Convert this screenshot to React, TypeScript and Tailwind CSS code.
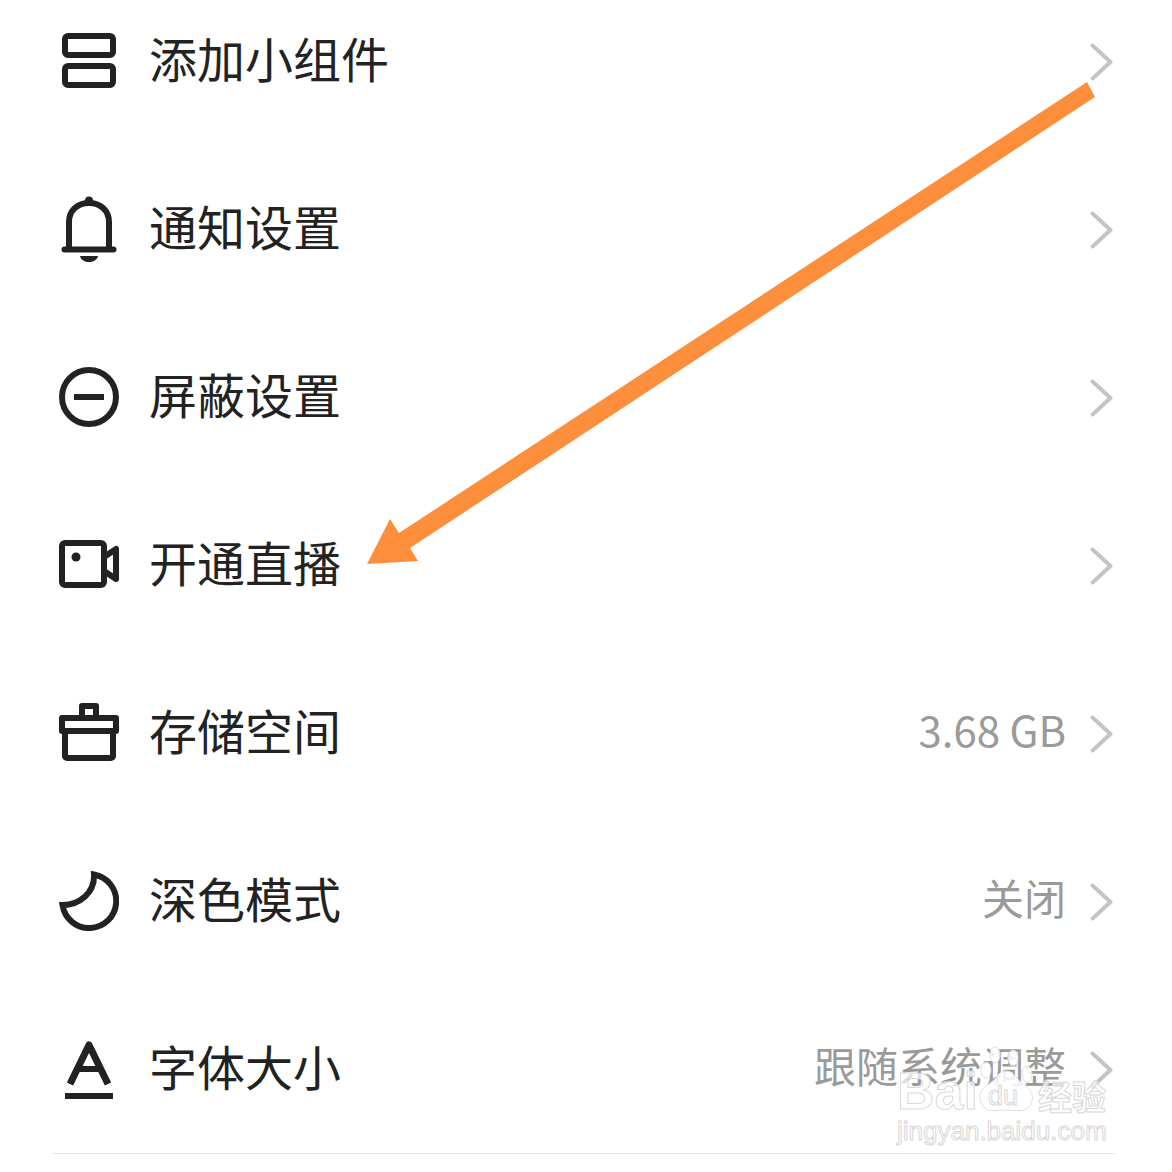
import type { ReactNode } from 'react'

const stroke = {
  fill: 'none',
  stroke: '#222222',
  strokeWidth: 6,
  strokeLinejoin: 'round' as const,
  strokeLinecap: 'round' as const,
}

// all icons share a 60px wide box, centered on the row
const WidgetIcon = () => (
  <svg width="60" height="60" viewBox="0 0 60 60">
    <rect x="6" y="5" width="48" height="19" rx="3" {...stroke} />
    <rect x="6" y="35" width="48" height="19" rx="3" {...stroke} />
  </svg>
)

const BellIcon = () => (
  <svg width="60" height="70" viewBox="0 0 60 70">
    <path d="M10 54V28C10 16 19 9 30 9s20 7 20 19v26" {...stroke} />
    <path d="M5.500 55.500h49" {...stroke} />
    <circle cx="30" cy="6.500" r="4" fill="#222222" />
    <path d="M21 62h18c-1 4-5 6-9 6s-8-2-9-6z" fill="#222222" />
  </svg>
)

const BlockIcon = () => (
  <svg width="60" height="60" viewBox="0 0 60 60">
    <circle cx="30" cy="30" r="27" {...stroke} />
    <rect x="15" y="27" width="30" height="6" fill="#222222" />
  </svg>
)

const VideoIcon = () => (
  <svg width="60" height="50" viewBox="0 0 60 50">
    <rect x="3" y="3" width="42" height="42" rx="3" {...stroke} />
    <circle cx="17" cy="17" r="4.500" fill="#222222" />
    <path d="M45 17l12-8v30l-12-8" {...stroke} />
  </svg>
)

const StorageIcon = () => (
  <svg width="60" height="60" viewBox="0 0 60 60">
    <path d="M23 15V3h14v12" {...stroke} />
    <path d="M3 28V15h54v13z" {...stroke} />
    <path d="M6 28v25a2 2 0 0 0 2 2h44a2 2 0 0 0 2-2V28" {...stroke} />
  </svg>
)

const MoonIcon = () => (
  <svg width="60" height="60" viewBox="0 0 60 60">
    <path d="M35 3.500A27 27 0 1 1 3.500 34C20 34 36 22 35 3.500z" {...stroke} strokeLinecap="butt" strokeLinejoin="miter" />
  </svg>
)

const FontIcon = () => (
  <svg width="50" height="60" viewBox="0 0 50 60">
    <path d="M6 45L25 6l19 39" {...stroke} strokeWidth={7} strokeLinecap="butt" />
    <path d="M13 30h24" {...stroke} strokeLinecap="butt" />
    <rect x="1" y="54" width="48" height="6" fill="#222222" />
  </svg>
)

const Chevron = () => (
  <svg width="24" height="38" viewBox="0 0 24 38" className="shrink-0 mt-[2px]">
    <path d="M2.500 2.500L20.500 19 2.500 35.500" fill="none" stroke="#c4c4c4" strokeWidth="4" strokeLinecap="round" strokeLinejoin="round" />
  </svg>
)

const rows: { icon: ReactNode; label: string; value?: string }[] = [
  { icon: <WidgetIcon />, label: '添加小组件' },
  { icon: <BellIcon />, label: '通知设置' },
  { icon: <BlockIcon />, label: '屏蔽设置' },
  { icon: <VideoIcon />, label: '开通直播' },
  { icon: <StorageIcon />, label: '存储空间', value: '3.68 GB' },
  { icon: <MoonIcon />, label: '深色模式', value: '关闭' },
  { icon: <FontIcon />, label: '字体大小', value: '跟随系统调整' },
]

function Row({ icon, label, value }: { icon: ReactNode; label: string; value?: string }) {
  return (
    <div className="h-[168px] flex items-center pl-[59px] pr-[58px]">
      <div className="w-[60px] flex items-center justify-center shrink-0">{icon}</div>
      <span className="ml-[30px] pb-[8px] text-[48px] leading-none text-[#222222]">{label}</span>
      {value && <span className="ml-auto pb-[8px] text-[42px] leading-none text-[#9a9a9a]">{value}</span>}
      <div className={value ? 'ml-[24px]' : 'ml-auto'}>
        <Chevron />
      </div>
    </div>
  )
}

export default function App() {
  return (
    <div className="relative w-[1172px] h-[1172px] overflow-hidden bg-white font-['Noto_Sans_CJK_SC','Noto_Sans',sans-serif]">
      <div className="-mt-[23px]">
        {rows.map((row) => (
          <Row key={row.label} {...row} />
        ))}
      </div>
      <div className="ml-[52px] mr-[57px] h-px bg-[#e6e6e6]" />

      {/* 矢印 */}
      <svg width="1172" height="1172" viewBox="0 0 1172 1172" className="absolute inset-0 pointer-events-none">
        <polygon points="1087,82 1095,97 410,548 418,561 367,564 390,519 399,533" fill="#fd8f3c" />
      </svg>

      {/* watermark */}
      <div className="absolute left-[897px] top-[1046px] w-[212px] pointer-events-none">
        <div className="flex items-end h-[71px] font-['Liberation_Sans',sans-serif] font-bold text-[52px] leading-none text-white/70 [-webkit-text-stroke:1px_#d8d8d8]">
          <span>Bai</span>
          <span className="relative ml-[1px] mb-[5px] w-[54px] h-[66px] shrink-0">
            <svg width="54" height="66" viewBox="0 0 54 66" className="absolute inset-0">
              <g fill="#ffffff" fillOpacity="0.85" stroke="#dedede" strokeWidth="1">
                <path d="M4 60C-3 50 3 42 11 37c7-4 8-12 16-12s10 8 16 12c8 5 14 13 8 23-5 7-15 4-24 4s-18 3-23-4z" />
                <ellipse cx="7" cy="24" rx="5" ry="8" />
                <ellipse cx="16" cy="9" rx="5" ry="8" />
                <ellipse cx="34" cy="12" rx="5" ry="8" />
                <ellipse cx="48" cy="28" rx="5" ry="8" />
              </g>
            </svg>
            <span className="absolute left-[9px] top-[37px] text-[27px] leading-none font-normal [-webkit-text-stroke:1px_#d8d8d8]">du</span>
          </span>
          <span className="ml-[5px] mb-[1px] text-[34px] leading-[41px] font-['Noto_Sans_CJK_SC',sans-serif]">经验</span>
        </div>
        <div className="mt-[1px] text-[26px] leading-none whitespace-nowrap font-['Liberation_Sans',sans-serif] text-white/70 [-webkit-text-stroke:1px_#d8d8d8]">
          jingyan.baidu.com
        </div>
      </div>
    </div>
  )
}
